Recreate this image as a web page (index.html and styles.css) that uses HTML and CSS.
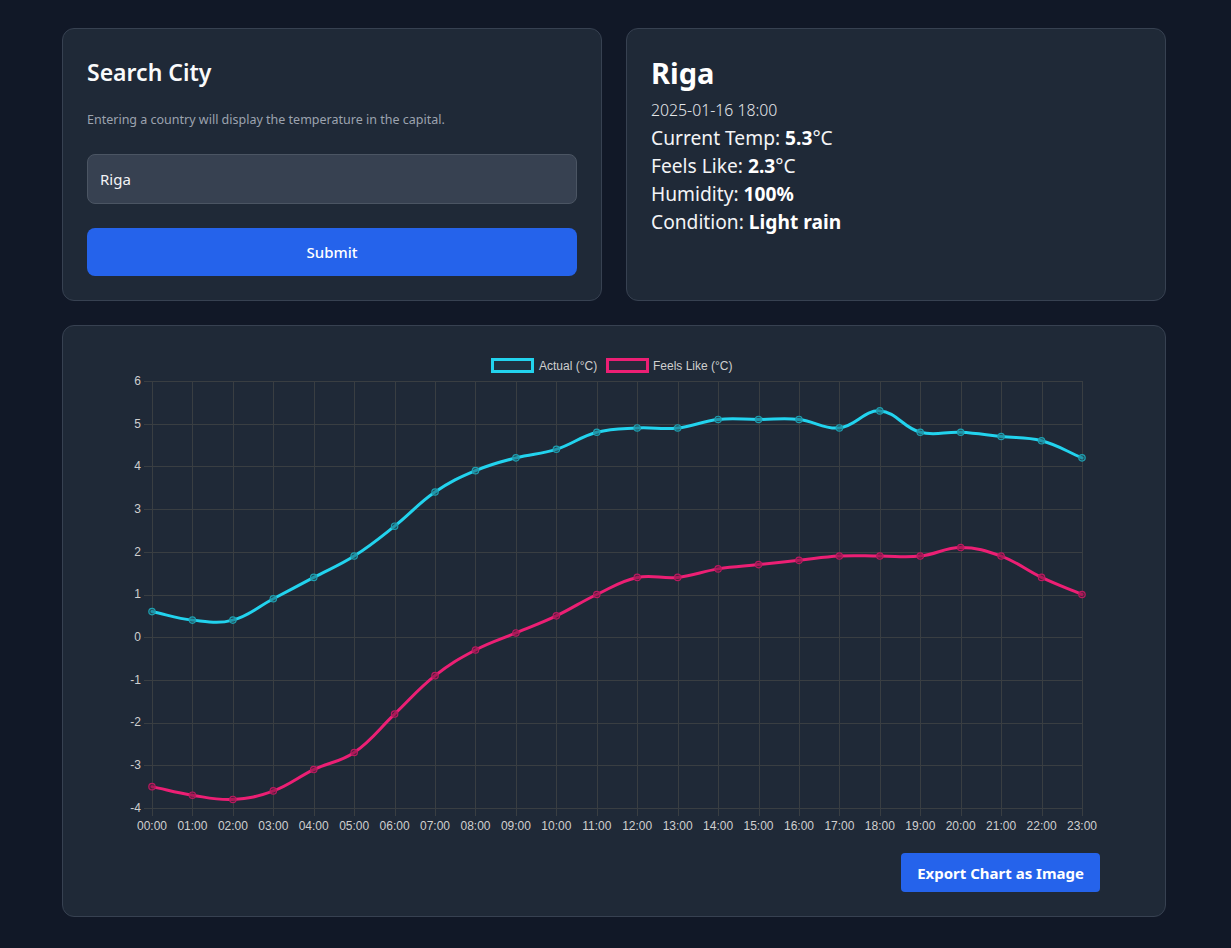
FILE: index.html
```html
<!DOCTYPE html>
<html lang="en">
<head>
<meta charset="utf-8">
<title>Weather</title>
<link rel="stylesheet" href="styles.css">
</head>
<body>
<div class="page">
  <div class="top">
    <section class="card search">
      <h1 class="search-title">Search City</h1>
      <p class="hint">Entering a country will display the temperature in the capital.</p>
      <input class="city-input" type="text" value="Riga">
      <button class="btn submit">Submit</button>
    </section>
    <section class="card info">
      <h2 class="city">Riga</h2>
      <div class="date">2025-01-16 18:00</div>
      <div class="row">Current Temp: <b>5.3</b>°C</div>
      <div class="row">Feels Like: <b>2.3</b>°C</div>
      <div class="row">Humidity: <b>100%</b></div>
      <div class="row">Condition: <b>Light rain</b></div>
    </section>
  </div>
  <section class="card chart-card">
    <svg class="chart" id="chart" width="1054" height="490" viewBox="0 0 1054 490">
      <g id="grid" class="grid"></g>
      <g class="legend">
        <rect x="405.5" y="9.5" width="40" height="12" class="lg-actual"/>
        <text x="452" y="19.5">Actual (°C)</text>
        <rect x="520.5" y="9.5" width="40" height="12" class="lg-feels"/>
        <text x="566" y="19.5">Feels Like (°C)</text>
      </g>
      <g class="yticks">
        <text x="54" y="35">6</text>
        <text x="54" y="78">5</text>
        <text x="54" y="120">4</text>
        <text x="54" y="163">3</text>
        <text x="54" y="206">2</text>
        <text x="54" y="248">1</text>
        <text x="54" y="291">0</text>
        <text x="54" y="334">-1</text>
        <text x="54" y="376">-2</text>
        <text x="54" y="419">-3</text>
        <text x="54" y="462">-4</text>
      </g>
      <g class="xticks">
        <text x="65" y="480">00:00</text>
        <text x="105.4" y="480">01:00</text>
        <text x="145.9" y="480">02:00</text>
        <text x="186.3" y="480">03:00</text>
        <text x="226.7" y="480">04:00</text>
        <text x="267.2" y="480">05:00</text>
        <text x="307.6" y="480">06:00</text>
        <text x="348" y="480">07:00</text>
        <text x="388.5" y="480">08:00</text>
        <text x="428.9" y="480">09:00</text>
        <text x="469.3" y="480">10:00</text>
        <text x="509.8" y="480">11:00</text>
        <text x="550.2" y="480">12:00</text>
        <text x="590.7" y="480">13:00</text>
        <text x="631.1" y="480">14:00</text>
        <text x="671.5" y="480">15:00</text>
        <text x="712" y="480">16:00</text>
        <text x="752.4" y="480">17:00</text>
        <text x="792.8" y="480">18:00</text>
        <text x="833.3" y="480">19:00</text>
        <text x="873.7" y="480">20:00</text>
        <text x="914.1" y="480">21:00</text>
        <text x="954.6" y="480">22:00</text>
        <text x="995" y="480">23:00</text>
      </g>
      <g id="series"></g>
    </svg>
    <div class="actions">
      <button class="btn export">Export Chart as Image</button>
    </div>
  </section>
</div>
<script src="chart.js"></script>
</body>
</html>
```

FILE: styles.css
```css
* { box-sizing: border-box; }
html, body { margin: 0; padding: 0; }
body {
  background: #111827;
  color: #f3f4f6;
  font-family: "Noto Sans", "Open Sans", sans-serif;
}
.page {
  width: 1104px;
  margin: 28px 0 0 62px;
  display: flex;
  flex-direction: column;
  gap: 24px;
  padding-bottom: 30px;
}
.top {
  display: grid;
  grid-template-columns: 540px 540px;
  gap: 24px;
}
.card {
  background: #1f2937;
  border: 1px solid #374151;
  border-radius: 12px;
  padding: 24px;
}
.search-title {
  margin: 0 0 19px;
  font-size: 23px;
  line-height: 38px;
  font-weight: 600;
  color: #f9fafb;
}
.hint {
  margin: 0 0 24px;
  font-size: 12.5px;
  line-height: 20px;
  color: #9ca3af;
}
.city-input {
  display: block;
  width: 100%;
  height: 50px;
  margin: 0 0 24px;
  padding: 0 12px;
  background: #374151;
  border: 1px solid #4b5563;
  border-radius: 8px;
  color: #f3f4f6;
  font-family: inherit;
  font-size: 15px;
  outline: none;
}
.btn {
  border: 0;
  background: #2563eb;
  color: #ffffff;
  font-family: inherit;
  cursor: pointer;
}
.submit {
  display: block;
  width: 100%;
  height: 48px;
  border-radius: 8px;
  font-size: 15px;
  font-weight: 500;
}
.city {
  margin: 0 0 3px;
  font-size: 29px;
  line-height: 40px;
  font-weight: 700;
  color: #ffffff;
}
.date {
  font-size: 15.8px;
  line-height: 28px;
  font-weight: 300;
  color: #e5e7eb;
}
.row {
  font-size: 19.2px;
  line-height: 28px;
  color: #f3f4f6;
}
.row b { font-weight: 700; color: #ffffff; }
.chart-card { padding: 24px; }
.chart {
  display: block;
  font-family: "Liberation Sans", Arial, sans-serif;
  font-size: 12px;
}
.chart text { fill: #cfcfcf; }
.yticks text { text-anchor: end; }
.xticks text { text-anchor: middle; }
.grid line { stroke: #393e42; stroke-width: 1; }
.lg-actual { stroke: #22d3ee; stroke-width: 3; fill: rgba(34, 211, 238, 0.05); }
.lg-feels { stroke: #ec1f74; stroke-width: 3; fill: rgba(236, 31, 116, 0.05); }
.line { fill: none; stroke-width: 3; stroke-linejoin: round; stroke-linecap: round; }
.line-actual { stroke: #22d3ee; }
.line-feels { stroke: #ec1f74; }
.pt-actual { fill: rgba(31, 100, 115, 0.55); stroke: #1e9fb0; stroke-width: 1.2; }
.pt-feels { fill: rgba(120, 20, 65, 0.55); stroke: #b81a5f; stroke-width: 1.2; }
.actions {
  display: flex;
  justify-content: flex-end;
  padding-right: 41px;
  margin-top: 13px;
}
.export {
  height: 39px;
  padding: 0 16px;
  border-radius: 4px;
  font-size: 15px;
  font-weight: 700;
}
```

FILE: chart.js
```js
(function () {
  var NS = "http://www.w3.org/2000/svg";
  var left = 65, right = 995, top = 31, bottom = 458;
  var yMax = 6, yMin = -4;
  var actual = [0.6, 0.4, 0.4, 0.9, 1.4, 1.9, 2.6, 3.4, 3.9, 4.2, 4.4, 4.8, 4.9, 4.9, 5.1, 5.1, 5.1, 4.9, 5.3, 4.8, 4.8, 4.7, 4.6, 4.2];
  var feels = [-3.5, -3.7, -3.8, -3.6, -3.1, -2.7, -1.8, -0.9, -0.3, 0.1, 0.5, 1.0, 1.4, 1.4, 1.6, 1.7, 1.8, 1.9, 1.9, 1.9, 2.1, 1.9, 1.4, 1.0];
  var n = actual.length;
  var step = (right - left) / (n - 1);
  function X(i) { return left + i * step; }
  function Y(v) { return bottom - (v - yMin) * (bottom - top) / (yMax - yMin); }

  var grid = document.getElementById("grid");
  function line(x1, y1, x2, y2) {
    var l = document.createElementNS(NS, "line");
    l.setAttribute("x1", x1); l.setAttribute("y1", y1);
    l.setAttribute("x2", x2); l.setAttribute("y2", y2);
    grid.appendChild(l);
  }
  for (var i = 0; i < n; i++) {
    var x = Math.round(X(i)) + 0.5;
    line(x, top, x, bottom + 8);
  }
  for (var v = yMin; v <= yMax; v++) {
    var y = Math.round(Y(v)) + 0.5;
    line(left - 8, y, right, y);
  }

  function pathFor(data, t) {
    var pts = data.map(function (v, i) { return { x: X(i), y: Y(v) }; });
    var cps = [];
    for (var i = 0; i < pts.length; i++) {
      var prev = i === 0 ? pts[0] : pts[i - 1];
      var cur = pts[i];
      var next = pts[Math.min(i + 1, pts.length - 1)];
      var d01 = Math.hypot(cur.x - prev.x, cur.y - prev.y);
      var d12 = Math.hypot(next.x - cur.x, next.y - cur.y);
      var s01 = d01 / (d01 + d12) || 0;
      var s12 = d12 / (d01 + d12) || 0;
      var fa = t * s01, fb = t * s12;
      cps.push({
        px: cur.x - fa * (next.x - prev.x), py: cur.y - fa * (next.y - prev.y),
        nx: cur.x + fb * (next.x - prev.x), ny: cur.y + fb * (next.y - prev.y)
      });
    }
    function clampY(y) { return Math.max(top, Math.min(bottom, y)); }
    var d = "M" + pts[0].x.toFixed(2) + " " + pts[0].y.toFixed(2);
    for (var j = 1; j < pts.length; j++) {
      d += " C" + cps[j - 1].nx.toFixed(2) + " " + clampY(cps[j - 1].ny).toFixed(2) +
        " " + cps[j].px.toFixed(2) + " " + clampY(cps[j].py).toFixed(2) +
        " " + pts[j].x.toFixed(2) + " " + pts[j].y.toFixed(2);
    }
    return { d: d, pts: pts };
  }

  var series = document.getElementById("series");
  function draw(data, cls) {
    var r = pathFor(data, 0.4);
    var p = document.createElementNS(NS, "path");
    p.setAttribute("d", r.d);
    p.setAttribute("class", "line line-" + cls);
    series.appendChild(p);
    r.pts.forEach(function (pt) {
      var c = document.createElementNS(NS, "circle");
      c.setAttribute("cx", pt.x.toFixed(2));
      c.setAttribute("cy", pt.y.toFixed(2));
      c.setAttribute("r", 3.2);
      c.setAttribute("class", "pt-" + cls);
      series.appendChild(c);
    });
  }
  draw(actual, "actual");
  draw(feels, "feels");
})();
```
